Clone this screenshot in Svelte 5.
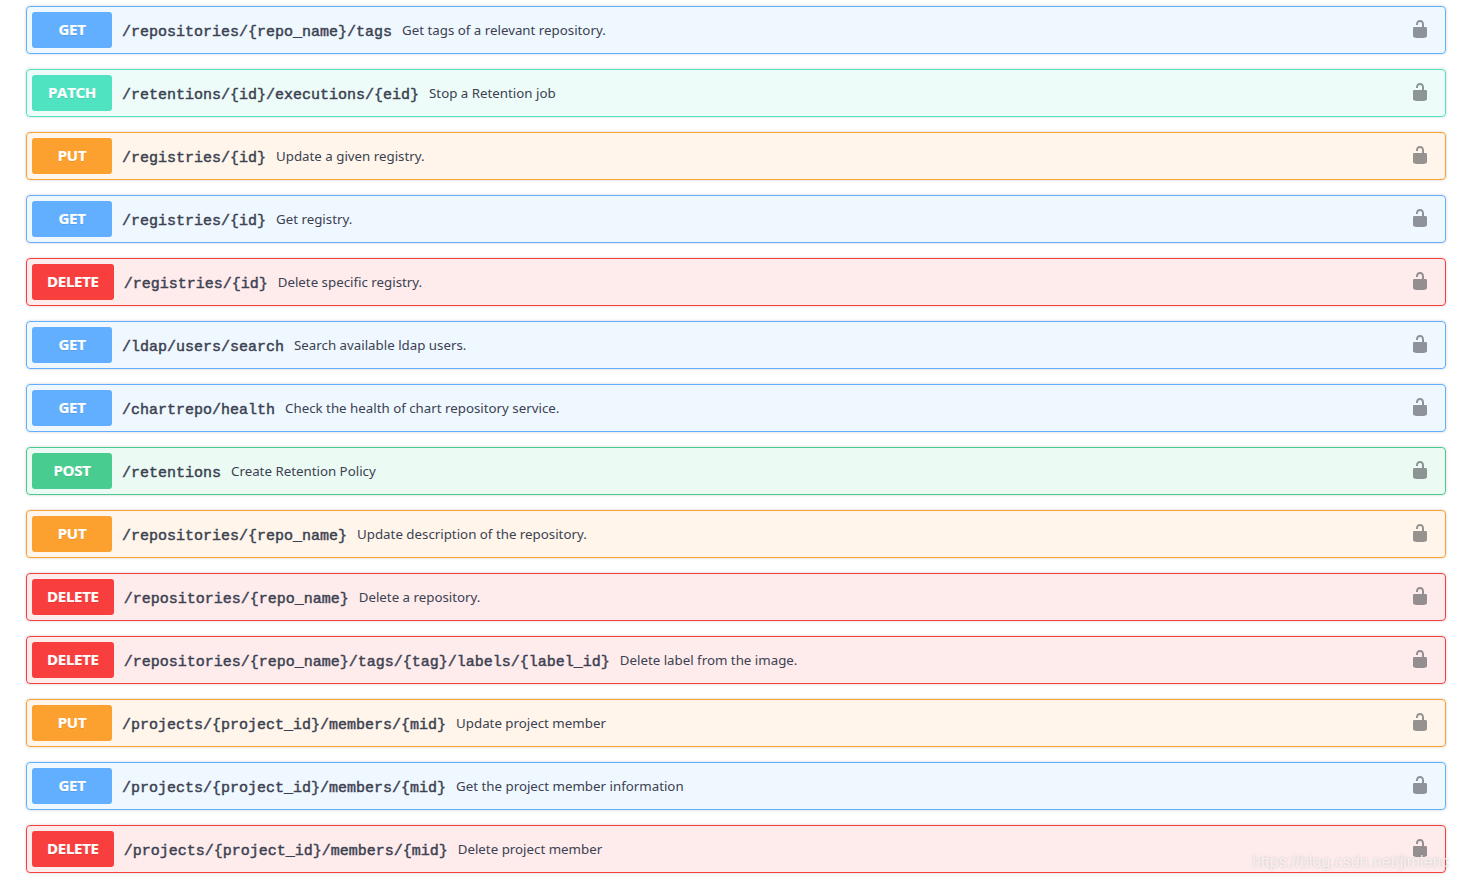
<script>
  const rows = [
    ['get', 'GET', '/repositories/{repo_name}/tags', 'Get tags of a relevant repository.'],
    ['patch', 'PATCH', '/retentions/{id}/executions/{eid}', 'Stop a Retention job'],
    ['put', 'PUT', '/registries/{id}', 'Update a given registry.'],
    ['get', 'GET', '/registries/{id}', 'Get registry.'],
    ['delete', 'DELETE', '/registries/{id}', 'Delete specific registry.'],
    ['get', 'GET', '/ldap/users/search', 'Search available ldap users.'],
    ['get', 'GET', '/chartrepo/health', 'Check the health of chart repository service.'],
    ['post', 'POST', '/retentions', 'Create Retention Policy'],
    ['put', 'PUT', '/repositories/{repo_name}', 'Update description of the repository.'],
    ['delete', 'DELETE', '/repositories/{repo_name}', 'Delete a repository.'],
    ['delete', 'DELETE', '/repositories/{repo_name}/tags/{tag}/labels/{label_id}', 'Delete label from the image.'],
    ['put', 'PUT', '/projects/{project_id}/members/{mid}', 'Update project member'],
    ['get', 'GET', '/projects/{project_id}/members/{mid}', 'Get the project member information'],
    ['delete', 'DELETE', '/projects/{project_id}/members/{mid}', 'Delete project member']
  ];
</script>

<main class="page">
  {#each rows as [kind, method, path, desc]}
    <section class="op {kind}">
      <span class="method">{method}</span>
      <span class="path">{path}</span>
      <span class="desc">{desc}</span>
      <svg class="lock" viewBox="0 0 20 20" width="20" height="20" aria-hidden="true">
        <path d="M15.8 8H14V5.6C14 2.703 12.665 1 10 1 7.334 1 6 2.703 6 5.6V6h2v-.801C8 3.754 8.797 3 10 3c1.203 0 2 .754 2 2.199V8H4c-.553 0-1 .646-1 1.199V17c0 .549.428 1.139.951 1.307l1.197.387C5.672 18.861 6.55 19 7.1 19h5.8c.549 0 1.428-.139 1.951-.307l1.196-.387c.524-.167.953-.757.953-1.306V9.199C17 8.646 16.352 8 15.8 8z"/>
      </svg>
    </section>
  {/each}
  <div class="mark">https://blog.csdn.net/jimlenc</div>
</main>

<style>
  :global(body) {
    margin: 0;
    background: #fff;
  }
  .page {
    position: relative;
    box-sizing: border-box;
    height: 880px;
    overflow: hidden;
    padding: 6px 12px 0 26px;
    color: #3b4151;
  }
  .op {
    --c: 97, 175, 254;
    display: flex;
    align-items: center;
    box-sizing: border-box;
    height: 48px;
    margin-bottom: 15px;
    padding: 5px;
    border: 1px solid rgb(var(--c));
    border-radius: 4px;
    background: rgba(var(--c), 0.1);
    box-shadow: 0 0 3px rgba(0, 0, 0, 0.19);
  }
  .patch { --c: 80, 227, 194; }
  .put { --c: 252, 161, 48; }
  .post { --c: 73, 204, 144; }
  .delete { --c: 249, 62, 62; }
  .method {
    box-sizing: border-box;
    min-width: 80px;
    height: 36px;
    padding: 0 15px;
    border-radius: 3px;
    background: rgb(var(--c));
    color: #fff;
    font: 700 15px/35px "Open Sans", sans-serif;
    letter-spacing: -0.3px;
    -webkit-text-stroke: 0.2px #fff;
    text-align: center;
    text-shadow: 0 1px 0 rgba(0, 0, 0, 0.1);
  }
  .path {
    padding: 5px 10px 0;
    font: 400 15px/20px "Liberation Mono", monospace;
    -webkit-text-stroke: 0.45px #3b4151;
    color: #3b4151;
  }
  .desc {
    font: 400 13.3px/20px "Noto Sans", sans-serif;
    color: #3b4151;
  }
  .lock {
    margin-left: auto;
    margin-right: 10px;
    fill: #3f4347;
    opacity: 0.55;
    position: relative;
    top: -1px;
  }
  .mark {
    position: absolute;
    left: 1252px;
    top: 852px;
    font: 400 16px/20px "Liberation Sans", sans-serif;
    color: rgba(255, 255, 255, 0.75);
    text-shadow: 0 0 2px rgba(120, 120, 120, 0.4);
    white-space: nowrap;
  }
</style>
